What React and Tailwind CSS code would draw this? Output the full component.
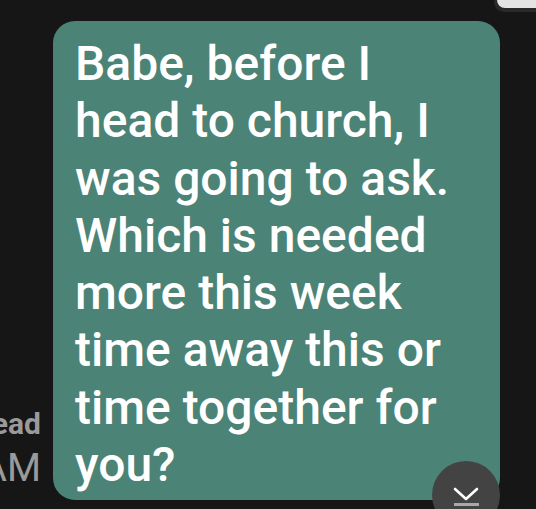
const lines = [
    'Babe, before I',
    'head to church, I',
    'was going to ask.',
    'Which is needed',
    'more this week',
    'time away this or',
    'time together for',
    'you?',
];

const App = () => {
    return (
        <div className="relative w-[536px] h-[509px] overflow-hidden bg-[#161616] font-['Roboto',sans-serif]">
            {/* Previous message edge */}
            <div className="absolute right-0 top-0 w-[42px] h-[12px] rounded-bl-[10px] bg-[#2a2a2a] pl-[3px] pb-[4px]">
                <div className="w-full h-full rounded-bl-[8px] bg-[#e4e4e4]" />
            </div>

            <div className="flex items-end h-full pt-[21px] pb-[9px]">
                {/* Read receipt / time */}
                <div className="w-[53px] flex flex-col items-end pr-[12px] pb-[8px] overflow-hidden text-[#9a9a9a]">
                    <span className="whitespace-nowrap text-[30px] leading-[40px] font-bold">Read</span>
                    <span className="whitespace-nowrap text-[39px] leading-[48px]">8:12 AM</span>
                </div>

                {/* Bubble */}
                <div className="w-[447px] h-full rounded-[22px] bg-[#4b8376] pl-[22px] pt-[14px]">
                    {lines.map((l) => (
                        <p key={l} className="text-white text-[48px] leading-[57.3px] font-medium whitespace-nowrap">
                            {l}
                        </p>
                    ))}
                </div>
            </div>

            {/* Scroll to bottom */}
            <div className="absolute left-[432px] top-[461px] w-[68px] h-[68px] rounded-full bg-[#434343] flex justify-center pt-[26px]">
                <div className="flex flex-col items-center">
                    <svg width="26" height="14" viewBox="0 0 26 14" fill="none" stroke="#ffffff" strokeWidth="2.6" strokeLinecap="round" strokeLinejoin="round">
                        <path d="M2 2 L13 12 L24 2" />
                    </svg>
                    <div className="w-[25px] h-[3px] bg-[#a8a8a8] mt-[2px]" />
                </div>
            </div>
        </div>
    );
};

export default App;
